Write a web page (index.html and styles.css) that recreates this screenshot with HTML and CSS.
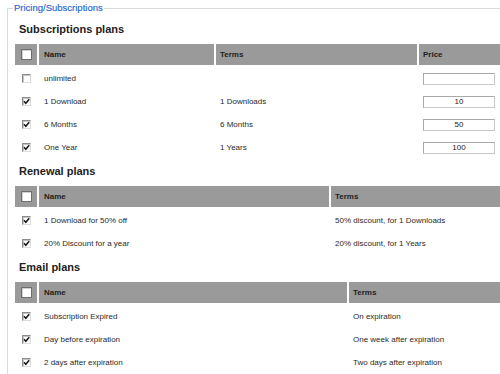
FILE: index.html
```html
<!DOCTYPE html>
<html lang="en">
<head>
<meta charset="utf-8">
<title>Pricing/Subscriptions</title>
<link rel="stylesheet" href="styles.css">
</head>
<body>
<div class="page">
  <fieldset class="panel">
    <legend class="panel-title">Pricing/Subscriptions</legend>

    <h3 class="section-title first">Subscriptions plans</h3>
    <table class="grid">
      <colgroup>
        <col class="c-check"><col class="c-name-sub"><col class="c-terms-sub"><col class="c-price">
      </colgroup>
      <thead>
        <tr><th class="cell-check"><span class="cb cb-head"></span></th><th class="cell-name">Name</th><th>Terms</th><th>Price</th></tr>
      </thead>
      <tbody>
        <tr><td class="cell-check"><span class="cb"></span></td><td class="cell-name">unlimited</td><td></td><td><input class="price" type="text" value=""></td></tr>
        <tr><td class="cell-check"><span class="cb checked"><svg viewBox="0 0 7 7"><path d="M1 3.2 L2.8 5.2 L6.2 1.2"/></svg></span></td><td class="cell-name">1 Download</td><td>1 Downloads</td><td><input class="price" type="text" value="10"></td></tr>
        <tr><td class="cell-check"><span class="cb checked"><svg viewBox="0 0 7 7"><path d="M1 3.2 L2.8 5.2 L6.2 1.2"/></svg></span></td><td class="cell-name">6 Months</td><td>6 Months</td><td><input class="price" type="text" value="50"></td></tr>
        <tr><td class="cell-check"><span class="cb checked"><svg viewBox="0 0 7 7"><path d="M1 3.2 L2.8 5.2 L6.2 1.2"/></svg></span></td><td class="cell-name">One Year</td><td>1 Years</td><td><input class="price" type="text" value="100"></td></tr>
      </tbody>
    </table>

    <h3 class="section-title">Renewal plans</h3>
    <table class="grid">
      <colgroup>
        <col class="c-check"><col class="c-name-ren"><col class="c-terms-ren">
      </colgroup>
      <thead>
        <tr><th class="cell-check"><span class="cb cb-head"></span></th><th class="cell-name">Name</th><th>Terms</th></tr>
      </thead>
      <tbody>
        <tr><td class="cell-check"><span class="cb checked"><svg viewBox="0 0 7 7"><path d="M1 3.2 L2.8 5.2 L6.2 1.2"/></svg></span></td><td class="cell-name">1 Download for 50% off</td><td>50% discount, for 1 Downloads</td></tr>
        <tr><td class="cell-check"><span class="cb checked"><svg viewBox="0 0 7 7"><path d="M1 3.2 L2.8 5.2 L6.2 1.2"/></svg></span></td><td class="cell-name">20% Discount for a year</td><td>20% discount, for 1 Years</td></tr>
      </tbody>
    </table>

    <h3 class="section-title">Email plans</h3>
    <table class="grid">
      <colgroup>
        <col class="c-check"><col class="c-name-mail"><col class="c-terms-mail">
      </colgroup>
      <thead>
        <tr><th class="cell-check"><span class="cb cb-head"></span></th><th class="cell-name">Name</th><th>Terms</th></tr>
      </thead>
      <tbody>
        <tr><td class="cell-check"><span class="cb checked"><svg viewBox="0 0 7 7"><path d="M1 3.2 L2.8 5.2 L6.2 1.2"/></svg></span></td><td class="cell-name">Subscription Expired</td><td>On expiration</td></tr>
        <tr><td class="cell-check"><span class="cb checked"><svg viewBox="0 0 7 7"><path d="M1 3.2 L2.8 5.2 L6.2 1.2"/></svg></span></td><td class="cell-name">Day before expiration</td><td>One week after expiration</td></tr>
        <tr><td class="cell-check"><span class="cb checked"><svg viewBox="0 0 7 7"><path d="M1 3.2 L2.8 5.2 L6.2 1.2"/></svg></span></td><td class="cell-name">2 days after expiration</td><td>Two days after expiration</td></tr>
      </tbody>
    </table>
  </fieldset>
</div>
</body>
</html>
```

FILE: styles.css
```css
html {
  overflow: hidden;
  background: #fff;
}

body {
  margin: 0;
  font-family: "Liberation Sans", Arial, sans-serif;
  font-size: 8px;
  color: #2a2a2a;
}

.page {
  width: 530px;
}

.panel {
  margin: 0 0 0 7px;
  padding: 0 0 10px 5px;
  border: 1px solid #d9d9d9;
  min-width: 0;
}

.panel-title {
  padding: 0 1px;
  font-size: 9.5px;
  line-height: 16px;
  color: #2668cf;
  -webkit-text-stroke: 0.15px #2668cf;
}

.section-title {
  margin: 5px 0 8px 0;
  padding-left: 6px;
  font-size: 11px;
  line-height: 14px;
  font-weight: bold;
  color: #222;
}

.section-title.first {
  margin-top: 6px;
}

.grid {
  width: 494px;
  table-layout: fixed;
  border-collapse: separate;
  border-spacing: 2px 0;
}

.c-check { width: 22px; }
.c-name-sub { width: 175px; }
.c-terms-sub { width: 201px; }
.c-price { width: 86px; }
.c-name-ren { width: 290px; }
.c-terms-ren { width: 174px; }
.c-name-mail { width: 308px; }
.c-terms-mail { width: 156px; }

.grid th {
  height: 21px;
  padding: 0 4px;
  background: #9a9a9a;
  border-bottom: 2px solid #fff;
  text-align: left;
  font-weight: bold;
  color: #1e1e1e;
  vertical-align: middle;
}

.grid td {
  height: 23px;
  padding: 0 4px;
  vertical-align: middle;
  white-space: nowrap;
}

.grid .cell-name {
  padding-left: 5px;
}

.grid .cell-check {
  padding: 0;
  text-align: center;
}

.cb {
  display: inline-block;
  box-sizing: border-box;
  width: 9px;
  height: 9px;
  vertical-align: middle;
  background: #fff;
  border: 1px solid;
  border-color: #8c8c8c #dcdcdc #dcdcdc #8c8c8c;
  box-shadow: inset 1px 1px 0 #c4c4c4;
  position: relative;
}

.cb svg {
  position: absolute;
  left: 0;
  top: 0;
  width: 7px;
  height: 7px;
}

.cb svg path {
  fill: none;
  stroke: #1a1a1a;
  stroke-width: 1.6;
}

.cb-head {
  width: 11px;
  height: 11px;
  border-color: #6e6e6e;
  box-shadow: inset 1px 1px 0 #d0d0d0;
}

.price {
  box-sizing: border-box;
  width: 72px;
  height: 12px;
  margin: 0;
  padding: 0 2px;
  border: 1px solid;
  border-color: #a9a9a9 #c8c8c8 #c8c8c8 #a9a9a9;
  background: #fff;
  font-family: "Liberation Sans", Arial, sans-serif;
  font-size: 8px;
  color: #222;
  text-align: center;
  vertical-align: middle;
  display: block;
}
```
